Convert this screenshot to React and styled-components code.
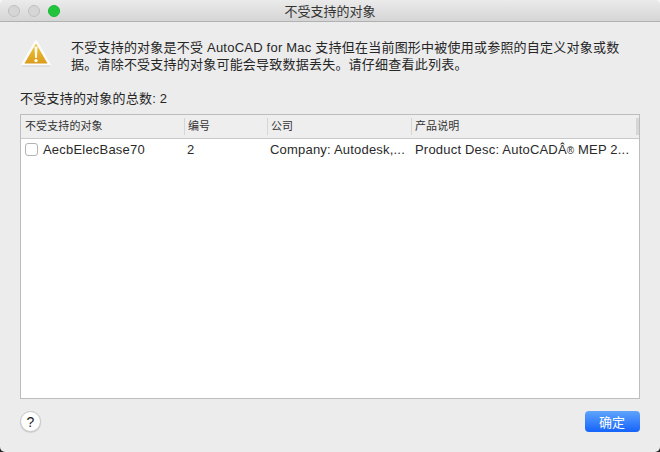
import React from "react";
import styled, { createGlobalStyle } from "styled-components";

const Global = createGlobalStyle`
  html, body { margin: 0; padding: 0; width: 660px; height: 452px; overflow: hidden; }
  body { background: linear-gradient(#f6f6f6 0 50%, #222 50% 100%); font-family: "Liberation Sans", "Noto Sans CJK SC", sans-serif; }
`;
const Window = styled.div`
  width: 660px; height: 452px; box-sizing: border-box; background: #ececec; border-radius: 5px;
  overflow: hidden; display: flex; flex-direction: column; color: #262626;
`;
const TitleBar = styled.header`
  height: 22px; box-sizing: border-box; flex: none; display: flex; align-items: center; position: relative;
  justify-content: center; background: linear-gradient(#ebebeb, #d5d5d5); border-bottom: 1px solid #b1b1b1;
  font-size: 13px; color: #333;
`;
const Lights = styled.div`
  position: absolute; left: 8px; top: 5px; display: flex; gap: 8px;
`;
const Light = styled.span`
  width: 12px; height: 12px; box-sizing: border-box; border-radius: 50%;
  background: ${p => p.$on ? "#1fc63c" : "#d6d6d6"}; border: 1px solid ${p => p.$on ? "#1cb334" : "#bfbfbf"};
`;
const Body = styled.main`
  flex: 1; display: flex; flex-direction: column; padding: 17px 20px 20px;
`;
const Message = styled.section`
  display: flex; gap: 20px; padding-left: 1px; height: 51px;
`;
const MsgText = styled.p`
  margin: 0; width: 566px; font-size: 13px; line-height: 17px; letter-spacing: 0.22px;
`;
const Count = styled.div`
  font-size: 13px; line-height: 16px; margin-top: 1px; margin-bottom: 7px; letter-spacing: 0.22px;
`;
const Table = styled.section`
  height: 285px; box-sizing: border-box; border: 1px solid #bdbdbd; background: #fff; display: flex; flex-direction: column;
`;
const HeadRow = styled.div`
  height: 24px; box-sizing: border-box; flex: none; display: grid; grid-template-columns: 163px 83px 144px 1fr 1px;
  background: #eeeeee; border-bottom: 1px solid #c9c9c9; align-items: center; font-size: 11px; color: #333;
  letter-spacing: 0.1px;
`;
const HeadCell = styled.div`
  height: 17px; line-height: 16px; box-sizing: border-box; padding-left: ${p => p.$first ? 4 : 3}px;
  border-left: ${p => p.$first ? "none" : "1px solid #d6d6d6"}; white-space: nowrap;
`;
const HeadEnd = styled.div`
  height: 17px; background: #d6d6d6; margin-left: -2px;
`;
const Row = styled.div`
  height: 21px; display: grid; grid-template-columns: 163px 83px 144px 1fr; align-items: center;
  font-size: 13px; color: #2a2a2a; letter-spacing: 0.2px;
`;
const Cell = styled.div`
  display: flex; align-items: center; gap: 5px; padding-left: ${p => p.$first ? 4 : p.$pad ?? 3}px; white-space: pre;
`;
const Check = styled.span`
  width: 13px; height: 13px; box-sizing: border-box; background: #fff; border: 1px solid #b4b4b4; border-radius: 3px;
`;
const Small = styled.span`
  font-size: 10px; letter-spacing: 0;
`;
const Footer = styled.footer`
  display: flex; justify-content: space-between; align-items: center; margin-top: 12px; height: 21px;
`;
const Help = styled.button`
  width: 21px; height: 21px; padding: 0; border-radius: 50%; background: #fff; border: 1px solid #c6c6c6;
  box-shadow: 0 1px 1px rgba(0,0,0,.12); font: 14px "Liberation Sans", sans-serif; color: #222;
`;
const Ok = styled.button`
  width: 55px; height: 21px; padding: 0 1px 0 0; border: none; border-radius: 4px; color: #fff;
  background: linear-gradient(#5fa4fb, #1563fb); font: 13px "Liberation Sans", "Noto Sans CJK SC", sans-serif;
`;

const Warning = () => (
  <svg width="30" height="28" viewBox="0 0 30 28">
    <defs>
      <linearGradient id="w" x1="0" y1="0" x2="0" y2="1">
        <stop offset="0" stopColor="#f3cc38" />
        <stop offset="1" stopColor="#d9981c" />
      </linearGradient>
    </defs>
    <path d="M15 2.2 L28.6 25.6 H1.4 Z" fill="url(#w)" stroke="#fbfbfb" strokeWidth="2.4" strokeLinejoin="round" />
    <path d="M1 27 H29" stroke="#cfcfcf" strokeWidth="1" />
    <path d="M13.4 7.5 h3.2 l-.7 11.5 h-1.8 Z" fill="#fdfbf0" />
    <circle cx="15" cy="21.6" r="1.7" fill="#fdfbf0" />
  </svg>
);

export default function App() {
  return (
    <Window>
      <Global />
      <TitleBar>
        <Lights><Light /><Light /><Light $on /></Lights>
        不受支持的对象
      </TitleBar>
      <Body>
        <Message>
          <Warning />
          <MsgText>不受支持的对象是不受 AutoCAD for Mac 支持但在当前图形中被使用或参照的自定义对象或数据。清除不受支持的对象可能会导致数据丢失。请仔细查看此列表。</MsgText>
        </Message>
        <Count>不受支持的对象的总数: 2</Count>
        <Table>
          <HeadRow>
            <HeadCell $first>不受支持的对象</HeadCell>
            <HeadCell>编号</HeadCell>
            <HeadCell>公司</HeadCell>
            <HeadCell>产品说明</HeadCell>
            <HeadEnd />
          </HeadRow>
          <Row>
            <Cell $first><Check />AecbElecBase70</Cell>
            <Cell>2</Cell>
            <Cell>Company: Autodesk,...</Cell>
            <Cell $pad={4}><span>Product Desc: AutoCADÂ<Small>®</Small> MEP 2...</span></Cell>
          </Row>
        </Table>
        <Footer>
          <Help>?</Help>
          <Ok>确定</Ok>
        </Footer>
      </Body>
    </Window>
  );
}
